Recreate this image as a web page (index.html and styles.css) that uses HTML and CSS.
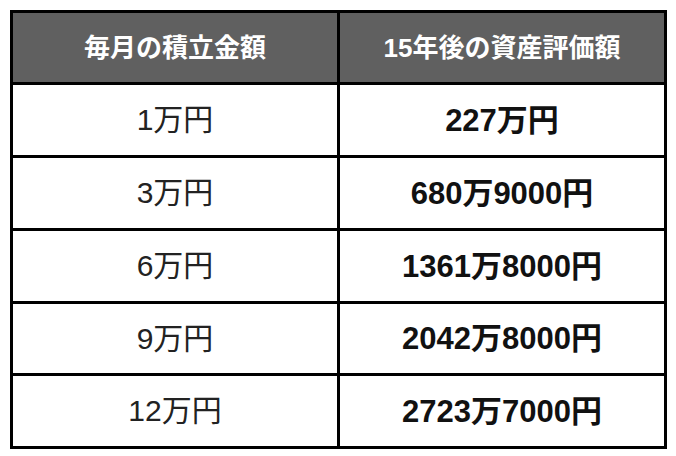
FILE: index.html
```html
<!DOCTYPE html>
<html lang="ja">
<head>
<meta charset="utf-8">
<link rel="stylesheet" href="styles.css">
</head>
<body>
<div class="table">
  <div class="cell head">毎月の積立金額</div>
  <div class="cell head">15年後の資産評価額</div>
  <div class="cell">1万円</div>
  <div class="cell val">227万円</div>
  <div class="cell">3万円</div>
  <div class="cell val">680万9000円</div>
  <div class="cell">6万円</div>
  <div class="cell val">1361万8000円</div>
  <div class="cell">9万円</div>
  <div class="cell val">2042万8000円</div>
  <div class="cell">12万円</div>
  <div class="cell val">2723万7000円</div>
</div>
</body>
</html>
```

FILE: styles.css
```css
html, body {
  margin: 0;
  padding: 0;
  background: #ffffff;
}
body {
  padding: 10px;
  font-family: "Liberation Sans", "Noto Sans CJK JP", sans-serif;
}
.table {
  display: grid;
  grid-template-columns: 324px 324px;
  grid-template-rows: 69px 70px 70px 70px 69px 70px;
  gap: 3px;
  padding: 3px;
  width: 651px;
  background: #000000;
}
.cell {
  background: #ffffff;
  display: flex;
  align-items: center;
  justify-content: center;
  font-size: 30px;
  color: #222222;
  line-height: 1;
}
.head {
  background: #606060;
  color: #ffffff;
  font-weight: bold;
  font-size: 26px;
}
.val {
  font-weight: bold;
  font-size: 31px;
  color: #111111;
}
```
